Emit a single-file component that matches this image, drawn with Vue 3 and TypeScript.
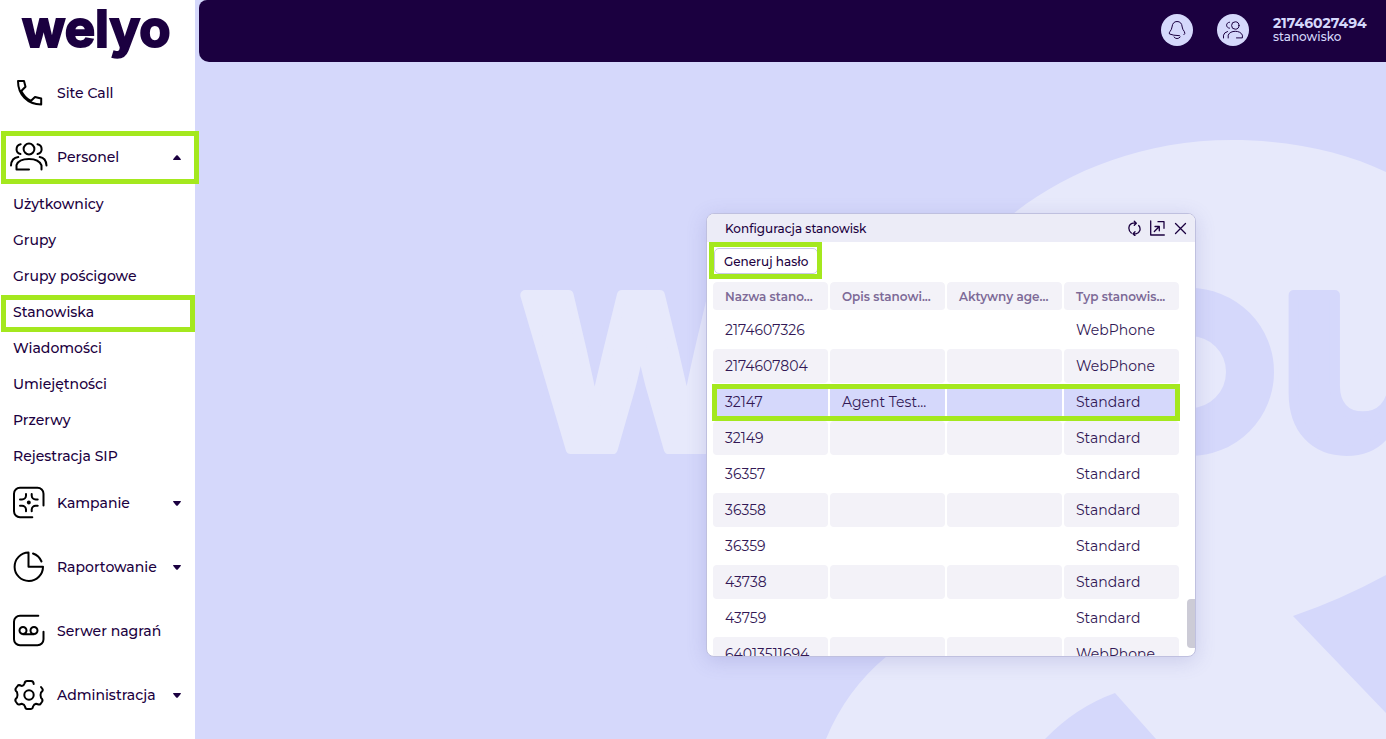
<script setup lang="ts">
import { ref } from 'vue'

interface SubItem {
  label: string
  marked?: boolean
}
interface NavItem {
  label: string
  icon: string
  children?: SubItem[]
  expandable?: boolean
  marked?: boolean
}
interface Station {
  name: string
  description: string
  agent: string
  type: string
}

const nav: NavItem[] = [
  { label: 'Site Call', icon: 'phone' },
  {
    label: 'Personel',
    icon: 'people',
    expandable: true,
    marked: true,
    children: [
      { label: 'Użytkownicy' },
      { label: 'Grupy' },
      { label: 'Grupy pościgowe' },
      { label: 'Stanowiska', marked: true },
      { label: 'Wiadomości' },
      { label: 'Umiejętności' },
      { label: 'Przerwy' },
      { label: 'Rejestracja SIP' },
    ],
  },
  { label: 'Kampanie', icon: 'target', expandable: true },
  { label: 'Raportowanie', icon: 'pie', expandable: true },
  { label: 'Serwer nagrań', icon: 'tape' },
  { label: 'Administracja', icon: 'gear', expandable: true },
]

const iconPaths: Record<string, string> = {
  phone:
    'M9 8h6l1.500 5.700-4.200 4.300M9 8c0 13.500 9.500 23.500 23.200 23.500v-6l-6.200-1.500-4.200 4c-4.500-2.300-7.500-5.500-9.500-10',
  people:
    'M11.700 7.300C6.200 8.500 6.200 16 11.500 17M28.500 7.300c5.500 1.200 5.500 8.700 0 9.700M9.300 20C5 20.500 2.300 23.500 2 28.500M30.700 20c4.300.5 6.500 3.500 6.800 8.500M20 32.400H7.500V28c1.500-4 6.500-6 12.500-6s11 2.500 12.500 6.300v4.100M14.600 12a5.400 5.400 0 1 0 10.800 0a5.400 5.400 0 1 0-10.800 0',
  target:
    'M34.500 22.500V10.800a6 6 0 0 0-6-6H11a6 6 0 0 0-6 6V28.300a6 6 0 0 0 6 6H23.300M17 11v1.500a4 4 0 0 1-4 4h-2M22.700 11v1.500a4 4 0 0 0 4 4h2M11 22.700h2a4 4 0 0 1 4 4v1.500M28.700 22.700h-2a4 4 0 0 0-4 4v1.500M18.800 19.600a1 1 0 1 0 2 0a1 1 0 1 0-2 0',
  pie: 'M19.500 5.500V19.700H34A14.200 14.200 0 1 1 19.500 5.500M24 6.500A14.200 14.200 0 0 1 32.500 14.500',
  tape: 'M29.300 4.800H11a6 6 0 0 0-6 6V28.300a6 6 0 0 0 6 6H28.500a6 6 0 0 0 6-6V20.700M10.500 19.500a3.500 3.500 0 1 0 7 0a3.500 3.500 0 1 0-7 0M21.500 19.500a3.500 3.500 0 1 0 7 0a3.500 3.500 0 1 0-7 0M14 23.200H25',
  gear: 'M24.700 9Q24.500 6 22 6H18Q16 6 15.500 8.500Q15 10.500 12.700 11C11 10 9.500 9.500 8.500 11L6.700 13.500Q5.800 15.500 8 17Q9 20 8 22.500Q5.500 24.500 6.700 26.500L8.500 29C9.800 30.300 11 29 12.700 28.800Q15.500 29.500 16 31.500Q16.500 33.900 18 33.900H22Q23.700 33.900 24 31.500Q25 29 27 28.700C29 29 30 30.500 31.500 29L33.200 26.500Q34.200 24.500 32 22.700Q31 20 32 17.500Q34.500 15.500 33.500 14L32 12M15.300 20a4.700 4.700 0 1 0 9.400 0a4.700 4.700 0 1 0-9.400 0',
}

const columns = ['Nazwa stano...', 'Opis stanowi...', 'Aktywny age...', 'Typ stanowis...']

const row = (name: string, type: string, description = ''): Station => ({
  name,
  description,
  agent: '',
  type,
})
const stations: Station[] = [
  row('2174607326', 'WebPhone'),
  row('2174607804', 'WebPhone'),
  row('32147', 'Standard', 'Agent Test...'),
  row('32149', 'Standard'),
  row('36357', 'Standard'),
  row('36358', 'Standard'),
  row('36359', 'Standard'),
  row('43738', 'Standard'),
  row('43759', 'Standard'),
  row('64013511694', 'WebPhone'),
]

const openSection = ref('Personel')
const selected = ref('32147')

function toggle(item: NavItem) {
  if (item.children) openSection.value = openSection.value === item.label ? '' : item.label
}
</script>

<template>
  <div class="app">
    <aside class="sidebar">
      <div class="logo">welyo</div>
      <nav>
        <template v-for="item in nav" :key="item.label">
          <button type="button" class="nav-item" @click="toggle(item)">
            <svg class="nav-icon" viewBox="0 0 40 40" aria-hidden="true">
              <path :d="iconPaths[item.icon]" />
            </svg>
            <span>{{ item.label }}</span>
            <svg
              v-if="item.expandable"
              class="caret"
              :class="{ up: openSection === item.label }"
              viewBox="0 0 8 5"
              aria-hidden="true"
            >
              <path d="M.5 0h7q.7.300.2 1L4.800 4.500q-.8.700-1.600 0L.3 1q-.5-.7.2-1z" />
            </svg>
            <i v-if="item.marked" class="marker marker-nav"></i>
          </button>
          <ul v-if="item.children && openSection === item.label" class="sub">
            <li v-for="child in item.children" :key="child.label">
              <a href="#">{{ child.label }}</a>
              <i v-if="child.marked" class="marker marker-sub"></i>
            </li>
          </ul>
        </template>
      </nav>
    </aside>

    <div class="main">
      <header class="topbar">
        <button type="button" class="round" aria-label="Powiadomienia">
          <svg viewBox="0 0 32 32" aria-hidden="true">
            <path
              d="M18.500 21.700Q12 21.500 8.500 20Q7.700 19 9 17.500Q10.700 15.500 11 13Q11.700 7.500 16 7.500Q20.700 7.500 21.200 13Q21.500 15.500 23.300 17.500Q24.700 19.500 23 20.700M13 23Q16 26.500 19.200 23"
            />
          </svg>
        </button>
        <button type="button" class="round" aria-label="Konto">
          <svg viewBox="0 0 32 32" aria-hidden="true">
            <circle cx="18.300" cy="11.500" r="3.700" />
            <path
              d="M12.500 8.200C8.500 8.500 8.500 13.900 12.500 14.200M6.500 24V21.200Q7 18.500 10.500 17.500M19.500 23.900H25.400V21.200C23.500 16 13 16 11.200 21.200V24"
            />
          </svg>
        </button>
        <div class="account">
          <strong>21746027494</strong>
          <span>stanowisko</span>
        </div>
      </header>

      <main class="desktop">
        <svg class="backdrop" viewBox="195 62 1191 677" preserveAspectRatio="xMaxYMid slice" aria-hidden="true">
          <path
            class="pale"
            d="M940 300C980 220 1090 140 1232 140C1290 140 1345 152 1386 172V575Q1340 600 1293 616L1386 713V739H1156L1115 693Q1076 707 1045 739H826Q846 690 887 656C930 600 1000 560 1040 540C970 480 920 390 940 300z"
          />
          <text class="pale" x="521" y="449">w</text>
          <circle class="ring" cx="1190" cy="372" r="60" />
          <text class="deep" x="1276" y="449">u</text>
        </svg>

        <section class="window" aria-label="Konfiguracja stanowisk">
          <div class="titlebar">
            <h1>Konfiguracja stanowisk</h1>
            <button type="button" aria-label="Odśwież">
              <svg viewBox="0 0 16 16" aria-hidden="true">
                <path
                  d="M5.300 13C1.500 10 2.300 4 7 3.200H10M8.300 1.200l2 2L8.300 5.200M12.700 5.500C15.300 8.500 14 13 10 13.800H7.300M9 11.800l-2 2l2 2"
                />
              </svg>
            </button>
            <button type="button" aria-label="Otwórz w nowym oknie">
              <svg viewBox="0 0 16 16" aria-hidden="true">
                <path d="M1.700 1v14H15.300M9 1.700H15V8.300M5.300 11.500l5-5M6 6.500h4.300v4.300" />
              </svg>
            </button>
            <button type="button" aria-label="Zamknij">
              <svg viewBox="0 0 16 16" aria-hidden="true">
                <path d="M3.500 3.500l10 10M13.500 3.500l-10 10" />
              </svg>
            </button>
          </div>
          <div class="toolbar">
            <button type="button" class="generate">
              Generuj hasło
              <i class="marker marker-button"></i>
            </button>
          </div>
          <div class="grid">
            <table>
              <thead>
                <tr>
                  <th v-for="column in columns" :key="column" scope="col">{{ column }}</th>
                </tr>
              </thead>
              <tbody>
                <tr
                  v-for="station in stations"
                  :key="station.name"
                  :class="{ selected: station.name === selected }"
                  @click="selected = station.name"
                >
                  <td>{{ station.name }}<i v-if="station.name === '32147'" class="marker marker-row"></i></td>
                  <td>{{ station.description }}</td>
                  <td>{{ station.agent }}</td>
                  <td>{{ station.type }}</td>
                </tr>
              </tbody>
            </table>
            <span class="thumb"></span>
          </div>
        </section>
      </main>
    </div>
  </div>
</template>

<style>
body {
  margin: 0;
}
</style>

<style scoped>
.app {
  display: flex;
  min-height: 100vh;
  background: #d5d8fb;
  color: #1b0040;
  font-family: Montserrat, Inter, 'Noto Sans', sans-serif;
  font-size: 14px;
}
button {
  border: 0;
  padding: 0;
  background: none;
  color: inherit;
  font: inherit;
  cursor: pointer;
}
svg {
  display: block;
  fill: none;
  stroke: currentColor;
  stroke-linecap: round;
  stroke-linejoin: round;
}
.sidebar {
  position: relative;
  z-index: 1;
  flex: none;
  width: 195px;
  background: #fff;
}
.logo {
  height: 64px;
  padding-left: 22px;
  font-family: Inter, sans-serif;
  font-size: 51px;
  line-height: 58px;
  font-weight: 700;
  -webkit-text-stroke: 2px currentColor;
}
.nav-item {
  position: relative;
  display: flex;
  align-items: center;
  gap: 8px;
  width: 100%;
  height: 58px;
  padding: 0 14px 0 9px;
  font-weight: 500;
  text-align: left;
}
.nav-item + .nav-item {
  margin-top: 6px;
}
.nav-icon {
  flex: none;
  width: 40px;
  height: 40px;
  color: #000;
  stroke-width: 2;
}
.caret {
  width: 8px;
  height: 5px;
  margin-left: auto;
  fill: currentColor;
  stroke: none;
}
.caret.up {
  transform: rotate(180deg);
}
.sub {
  margin: 0;
  padding: 0;
  list-style: none;
}
.sub li {
  position: relative;
}
.sub a {
  display: block;
  padding-left: 13px;
  color: inherit;
  font-weight: 500;
  line-height: 36px;
  text-decoration: none;
}
.marker {
  position: absolute;
  z-index: 2;
  border: 5px solid #a4e81e;
  pointer-events: none;
}
.marker-nav {
  inset: 3px -4px 2px 1px;
}
.marker-sub {
  inset: 1px 0 -2px 1px;
}
.marker-button {
  inset: -7px -5px -6px -6px;
}
.marker-row {
  top: 104px;
  left: 5px;
  right: 15px;
  height: 27px;
}
.main {
  display: flex;
  flex: 1;
  flex-direction: column;
  min-width: 0;
}
.topbar {
  display: flex;
  align-items: center;
  justify-content: flex-end;
  gap: 24px;
  height: 62px;
  margin-left: 4px;
  padding-right: 19px;
  box-sizing: border-box;
  border-radius: 8px 0 0 10px;
  background: #1b0040;
  color: #d5d8fb;
}
.round {
  width: 32px;
  height: 32px;
  margin-bottom: 2px;
  border-radius: 50%;
  background: #d5d8fb;
  color: #1b0040;
}
.account {
  display: flex;
  flex-direction: column;
  min-width: 94px;
  margin-bottom: 2px;
  font-size: 12px;
  font-weight: 500;
  line-height: 14px;
}
.account strong {
  font-size: 14px;
}
.desktop {
  position: relative;
  flex: 1;
  overflow: hidden;
}
.backdrop {
  position: absolute;
  inset: 0;
  width: 100%;
  height: 100%;
  stroke: none;
}
.backdrop text {
  font-family: Inter, sans-serif;
  font-size: 282px;
  font-weight: 700;
  stroke-width: 10px;
}
.pale {
  fill: #e7e9fb;
}
text.pale {
  stroke: #e7e9fb;
}
.deep {
  fill: #d5d8fb;
  stroke: #d5d8fb;
}
.ring {
  stroke: #d5d8fb;
  stroke-width: 48px;
}
.window {
  position: absolute;
  top: 151px;
  right: 190px;
  display: flex;
  flex-direction: column;
  width: 490px;
  height: 444px;
  box-sizing: border-box;
  overflow: hidden;
  border: 1px solid #bfc0df;
  border-radius: 8px;
  background: #fff;
  box-shadow: 0 4px 20px rgba(90, 90, 170, 0.2);
}
.titlebar {
  display: flex;
  flex: none;
  align-items: center;
  gap: 7px;
  height: 28px;
  padding: 0 7px 0 18px;
  background: #ececf7;
}
.titlebar h1 {
  flex: 1;
  margin: 0;
  font-size: 12px;
  font-weight: 500;
}
.titlebar svg {
  width: 16px;
  height: 16px;
  stroke-width: 1.3;
}
.toolbar {
  flex: none;
  height: 38px;
  padding: 6px 7px;
  box-sizing: border-box;
}
.generate {
  position: relative;
  height: 26px;
  padding: 0 9px;
  border: 1px solid #c8cae6;
  border-radius: 5px;
  font-size: 12px;
  font-weight: 500;
}
.grid {
  position: relative;
  flex: 1;
  min-height: 0;
  padding: 0 14px 0 4px;
  overflow: hidden;
}
table {
  width: 100%;
  table-layout: fixed;
  border-collapse: separate;
  border-spacing: 2px;
}
th,
td {
  box-sizing: border-box;
  padding: 0 0 0 12px;
  border-radius: 4px;
  text-align: left;
  white-space: nowrap;
}
th {
  height: 29px;
  border-bottom: 1px solid transparent;
  background: #f3f2f8;
  background-clip: padding-box;
  color: #7d6a97;
  font-size: 12px;
  font-weight: 600;
}
td {
  height: 34px;
  color: #321855;
}
tbody tr:nth-child(even) td {
  background: #f3f2f8;
}
tbody tr.selected td {
  background: #d5d8fb;
}
.thumb {
  position: absolute;
  right: 0;
  bottom: 8px;
  width: 8px;
  height: 49px;
  border-radius: 4px 0 0 4px;
  background: #cccbd6;
}
</style>
